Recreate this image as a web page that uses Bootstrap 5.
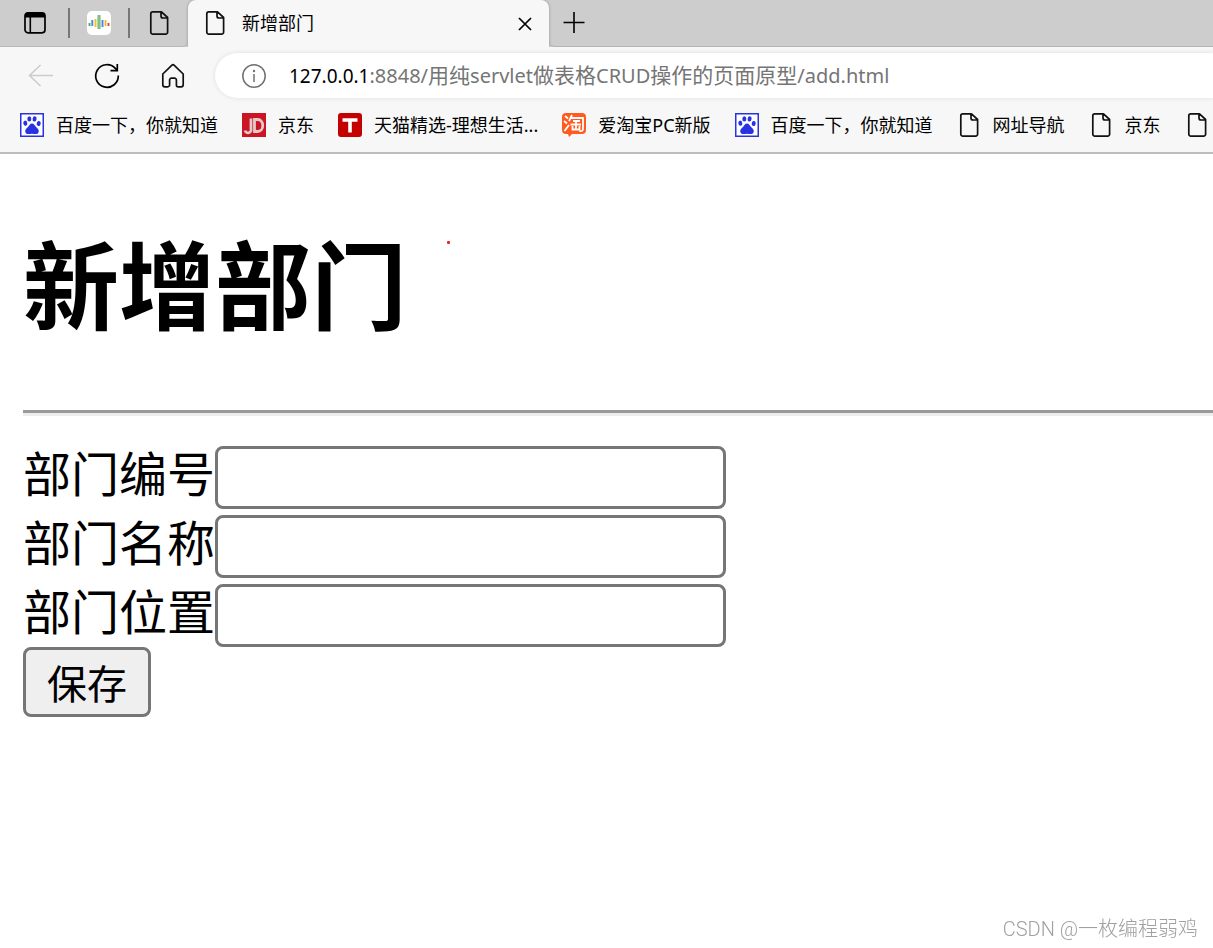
<!DOCTYPE html>
<html lang="zh-CN">
<head>
<meta charset="utf-8">
<meta name="viewport" content="width=device-width, initial-scale=1">
<title>新增部门</title>
<link href="https://cdn.jsdelivr.net/npm/bootstrap@5.3.0/dist/css/bootstrap.min.css" rel="stylesheet">
<style>
  body { font-family: "Noto Sans", "Noto Sans CJK SC", sans-serif; color: #000; background: #fff; overflow-x: hidden; }
  svg { display: block; flex: none; }
  .plain-btn { border: 0; padding: 0; background: transparent; color: #000; flex: none; }
  .tab-strip { height: 47px; background: #cdcdcd; }
  .tab-tools { gap: 17px; padding: 0 17px 0 23px; height: 47px; border-bottom: 1px solid #b9b9b9; border-bottom-right-radius: 6px; }
  .tab-rule { width: 2px; height: 30px; background: #777; }
  .tab-tools .tab-rule:nth-child(2) { margin-left: 4px; }
  .open-tab { width: 361px; height: 47px; background: #f7f7f7; border-radius: 8px 8px 0 0; padding: 0 12px 2px 15px; gap: 15px; font-size: 18px; line-height: 24px; box-shadow: 0 0 3px rgba(0,0,0,.3); clip-path: inset(0 -4px); }
  .strip-rest { height: 47px; padding-left: 13px; border-bottom: 1px solid #b4b4b4; border-bottom-left-radius: 6px; }
  .tool-row { background: #f7f7f7; padding: 6px 0 6px 27px; }
  .tool-group { gap: 38px; margin-right: 28px; }
  .address { height: 45px; background: #fff; border-radius: 23px 0 0 23px; padding-left: 27px; gap: 23px; box-shadow: 0 0 5px rgba(0,0,0,.1); min-width: 0; }
  .address-text { font-size: 20px; line-height: 30px; color: #757575; white-space: nowrap; }
  .address-text .han { font-size: 21px; }
  .host { color: #000; font-size: 19px; }
  .bookmarks { background: #f7f7f7; height: 50px; padding: 0 0 6px 20px; gap: 24px; border-bottom: 2px solid #bdbdbd; overflow: hidden; }
  .bookmarks a { gap: 12px; font-size: 18px; line-height: 24px; color: #000; text-decoration: none; white-space: nowrap; flex: none; }
  .sheet { padding: 59px 0 0 23px; }
  .page-title { font-size: 96px; line-height: 144px; font-weight: 700; margin: 0; }
  .red-dot { width: 3px; height: 3px; border-radius: 1px; background: #e22; margin: 28px 0 0 40px; }
  .sheet hr { margin: 53px 0 30px; border: 0; border-top: 3px solid #9a9a9a; border-bottom: 3px solid #eee; opacity: 1; }
  .field-row { height: 69px; }
  .field-row label { font-size: 48px; line-height: 56px; }
  .field-row input { width: 511px; height: 63px; border: 3px solid #767676; border-radius: 8px; padding: 3px 6px; font-size: 40px; background: #fff; }
  .save-btn { width: 128px; height: 70px; border: 3px solid #767676; border-radius: 8px; background: #efefef; color: #000; font-size: 40px; line-height: 60px; padding: 4px 0 0; margin-top: -6px; }
  .watermark { right: 15px; bottom: 4px; font-size: 20px; line-height: 30px; color: #a0a0a0; font-family: Roboto, "Noto Sans CJK SC", sans-serif; font-weight: 300; text-shadow: -1px -1px 0 #fff; }
</style>
</head>
<body>
<svg width="0" height="0" class="position-absolute" aria-hidden="true">
  <symbol id="doc" viewBox="0 0 24 24"><path d="M5.800.9H14.500L20.600 6.500V21A2 2 0 0 1 18.600 23.100H5.800A2 2 0 0 1 3.800 21V2.900A2 2 0 0 1 5.800.9ZM14 1V5A2 2 0 0 0 16 7H20.500" fill="none" stroke="#111" stroke-width="1.700" stroke-linejoin="round"/></symbol>
  <symbol id="paw" viewBox="0 0 24 24"><rect x=".75" y=".75" width="22.500" height="22.500" fill="#fff" stroke="#2932e1" stroke-width="1.500"/><g fill="#2932e1"><ellipse cx="5.300" cy="10.200" rx="2" ry="2.600" transform="rotate(-12 5.300 10.200)"/><ellipse cx="9.300" cy="5.900" rx="2" ry="2.700"/><ellipse cx="14.600" cy="5.900" rx="2" ry="2.700" transform="rotate(10 14.600 5.900)"/><ellipse cx="18.700" cy="10.500" rx="2" ry="2.600" transform="rotate(12 18.700 10.500)"/><path d="M12 10.500C14 10.500 14.700 12.500 16 14C17.600 15.500 19.300 16.800 18.700 18.900C18 21.500 15 21 12 20.700C9 21 6 21.500 5.300 18.900C4.700 16.800 6.400 15.500 8 14C9.300 12.500 10 10.500 12 10.500Z"/></g></symbol>
</svg>

<header>
  <div class="tab-strip d-flex">
    <div class="tab-tools d-flex align-items-center flex-shrink-0">
      <button class="plain-btn" aria-label="标签页操作"><svg width="24" height="24" viewBox="0 0 24 24"><rect x="2" y="1.800" width="20" height="20" rx="3" fill="none" stroke="#000" stroke-width="1.700"/><path d="M2 6.500V4.500A3 3 0 0 1 5 1.500H19A3 3 0 0 1 22 4.500V6.500Z"/><path d="M7.300 6V21.500" stroke="#000" stroke-width="1.600"/></svg></button>
      <span class="tab-rule"></span>
      <button class="plain-btn" aria-label="固定标签"><svg width="24" height="24" viewBox="0 0 24 24"><rect width="24" height="24" rx="5" fill="#fff"/><g stroke-width="1.900" fill="none"><path d="M2.500 12V15" stroke="#4caf50"/><path d="M5.300 9V15M15.500 9V16" stroke="#4285f4"/><path d="M8.500 8V16M18.500 9V15" stroke="#f9bb2d"/><path d="M12 4V18" stroke="#7dc27f" stroke-width="3.200"/><path d="M21.500 12V15" stroke="#ea4335"/></g></svg></button>
      <span class="tab-rule"></span>
      <button class="plain-btn" aria-label="固定页面"><svg width="24" height="24"><use href="#doc"/></svg></button>
    </div>
    <div class="open-tab d-flex align-items-center flex-shrink-0">
      <svg width="24" height="24"><use href="#doc"/></svg>
      <span>新增部门</span>
      <button class="plain-btn ms-auto" aria-label="关闭标签页"><svg width="24" height="24" viewBox="0 0 24 24"><path d="M6 7L18 19M18 7L6 19" stroke="#000" stroke-width="1.700"/></svg></button>
    </div>
    <div class="strip-rest d-flex align-items-center flex-grow-1">
      <button class="plain-btn" aria-label="新建标签页"><svg width="24" height="24" viewBox="0 0 24 24"><path d="M1.500 11.500H22.500M12 1V22" stroke="#000" stroke-width="1.600"/></svg></button>
    </div>
  </div>

  <div class="tool-row d-flex align-items-center">
    <nav class="tool-group d-flex flex-shrink-0" aria-label="导航">
      <button class="plain-btn" aria-label="后退" disabled><svg width="28" height="28" viewBox="0 0 28 28"><path d="M26 13.500H2.500M13.500 3L2.500 13.500L13.500 24" fill="none" stroke="#ccc" stroke-width="1.600"/></svg></button>
      <button class="plain-btn" aria-label="刷新"><svg width="28" height="28" viewBox="0 0 28 28"><path d="M25.300 13.500A11.300 11.300 0 1 1 22.300 6.300L24 8.300M24.300 2V8.700H17.500" fill="none" stroke="#000" stroke-width="1.700"/></svg></button>
      <button class="plain-btn" aria-label="主页"><svg width="28" height="28" viewBox="0 0 28 28"><path d="M3.800 12L12.700 3.300A1.900 1.900 0 0 1 15.300 3.300L24.200 12V22.800A2 2 0 0 1 22.200 24.800H19.200A1.800 1.800 0 0 1 17.400 23V18A1.800 1.800 0 0 0 15.600 16.200H12.400A1.800 1.800 0 0 0 10.600 18V23A1.800 1.800 0 0 1 8.800 24.800H5.800A2 2 0 0 1 3.800 22.800Z" fill="none" stroke="#111" stroke-width="1.700" stroke-linejoin="round"/></svg></button>
    </nav>
    <div class="address d-flex align-items-center flex-grow-1">
      <svg width="24" height="24" viewBox="0 0 24 24"><circle cx="12" cy="12" r="11.200" fill="none" stroke="#707070" stroke-width="1.500"/><path d="M12 10V18" stroke="#707070" stroke-width="1.500"/><circle cx="12" cy="7" r="1.200" fill="#707070"/></svg>
      <div class="address-text" role="textbox" tabindex="0" aria-label="地址"><span class="host">127.0.0.1</span>:8848/<span class="han">用纯</span>servlet<span class="han">做表格</span>CRUD<span class="han">操作的页面原型</span>/add.html</div>
    </div>
  </div>

  <nav class="bookmarks d-flex align-items-center" aria-label="收藏夹">
    <a href="#" class="d-flex align-items-center"><svg width="24" height="24"><use href="#paw"/></svg>百度一下，你就知道</a>
    <a href="#" class="d-flex align-items-center"><svg width="24" height="24" viewBox="0 0 24 24"><rect width="24" height="24" fill="#cb1524"/><path d="M9 5.500V16A3 3 0 0 1 3 17.500M12.500 6.500V18.500H15.500C22.500 18.500 22.500 6.500 15.500 6.500Z" fill="none" stroke="#e3c9c9" stroke-width="2.800"/></svg>京东</a>
    <a href="#" class="d-flex align-items-center"><svg width="24" height="24" viewBox="0 0 24 24"><rect width="24" height="24" rx="3" fill="#c40000"/><path d="M4.500 7H19.500M12 7V19.500" stroke="#fff" stroke-width="3.600"/></svg>天猫精选-理想生活...</a>
    <a href="#" class="d-flex align-items-center"><svg width="24" height="24" viewBox="0 0 24 24"><path d="M4 0H20A4 4 0 0 1 24 4V17A4 4 0 0 1 20 21H10L7 24L6 21H4A4 4 0 0 1 0 17V4A4 4 0 0 1 4 0Z" fill="#ff5a1f"/><path d="M3 3L6 5.500M2 8L5 10.500M2.500 18L7 12M10 2L7 8M9 5H21V16Q21 18.500 17.500 18M11 8H18M8.500 11.500H19M14 8V16M10.500 13V16.500H17.500V13" fill="none" stroke="#fff" stroke-width="1.800"/></svg>爱淘宝PC新版</a>
    <a href="#" class="d-flex align-items-center"><svg width="24" height="24"><use href="#paw"/></svg>百度一下，你就知道</a>
    <a href="#" class="d-flex align-items-center"><svg width="24" height="24"><use href="#doc"/></svg>网址导航</a>
    <a href="#" class="d-flex align-items-center"><svg width="24" height="24"><use href="#doc"/></svg>京东</a>
    <a href="#" class="d-flex align-items-center" aria-label="收藏页面"><svg width="24" height="24"><use href="#doc"/></svg></a>
  </nav>
</header>

<main class="sheet">
  <div class="d-flex align-items-start">
    <h1 class="page-title">新增部门</h1>
    <span class="red-dot"></span>
  </div>
  <hr>
  <form>
    <div class="field-row d-flex align-items-start"><label for="deptno">部门编号</label><input id="deptno" type="text"></div>
    <div class="field-row d-flex align-items-start"><label for="dname">部门名称</label><input id="dname" type="text"></div>
    <div class="field-row d-flex align-items-start"><label for="loc">部门位置</label><input id="loc" type="text"></div>
    <button type="button" class="save-btn">保存</button>
  </form>
</main>
<div class="watermark position-fixed">CSDN @一枚编程弱鸡</div>
<script src="https://cdn.jsdelivr.net/npm/bootstrap@5.3.0/dist/js/bootstrap.bundle.min.js"></script>
</body>
</html>
